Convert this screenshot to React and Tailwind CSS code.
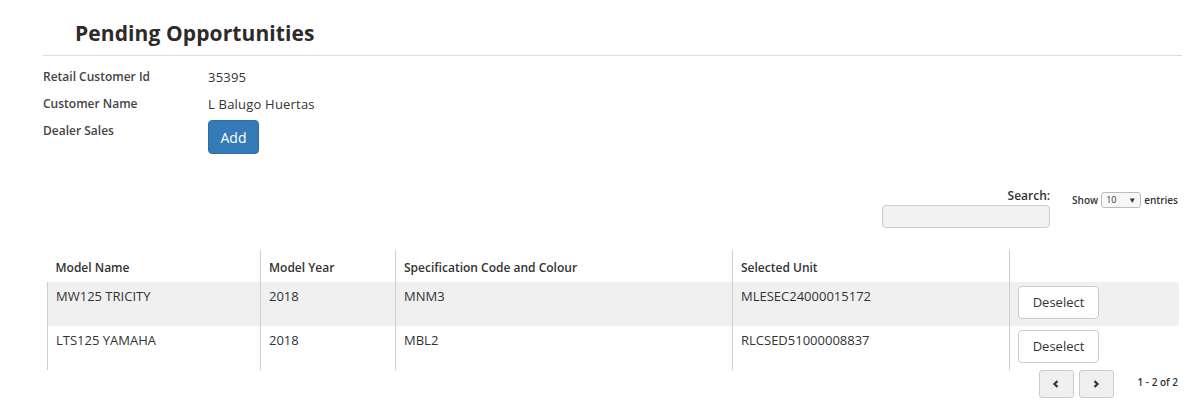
import React from "react";

const rows = [
  { name: "MW125 TRICITY", year: "2018", spec: "MNM3", unit: "MLESEC24000015172", bg: "bg-[#f0f0f0]" },
  { name: "LTS125 YAMAHA", year: "2018", spec: "MBL2", unit: "RLCSED51000008837", bg: "bg-white" },
];

export default function App() {
  return (
    <div className="w-[1199px] h-[414px] bg-white text-[#333] overflow-hidden" style={{ fontFamily: '"Open Sans", "Noto Sans", sans-serif' }}>
      <div className="pl-[43px] pr-[17px] pt-[19px]">
        <div className="border-b border-[#dddddd] pb-[7px] pl-[32px]">
          <h1 className="text-[21px] leading-[29px] font-bold text-[#2f2a2a] tracking-[0.1px]">Pending Opportunities</h1>
        </div>
        <div className="mt-[11px] grid grid-cols-[165px_1fr] text-[12px]">
          <div className="h-[27px] leading-[20px] font-semibold text-[#444]">Retail Customer Id</div>
          <div className="h-[27px] leading-[20px] text-[13px] tracking-[0.2px]">35395</div>
          <div className="h-[27px] leading-[20px] font-semibold text-[#444]">Customer Name</div>
          <div className="h-[27px] leading-[20px] text-[13px] tracking-[0.2px]">L Balugo Huertas</div>
          <div className="leading-[20px] font-semibold text-[#444]">Dealer Sales</div>
          <div>
            <button className="mt-[-1px] w-[51px] h-[34px] rounded-[4px] bg-[#337ab7] border border-[#2e6da4] text-white text-[14px]">Add</button>
          </div>
        </div>
        <div className="mt-[32px] flex justify-end items-start">
          <div className="flex flex-col items-end">
            <label className="text-[12px] font-semibold text-[#333] leading-[18px] mt-[1px]">Search:</label>
            <input className="mt-[0px] w-[168px] h-[23px] bg-[#f2f2f2] border border-[#cccccc] rounded-[4px]" />
          </div>
          <div className="ml-[22px] mr-[4px] flex items-center gap-[3px] text-[10px] font-semibold text-[#333] mt-[6px]">
            <span>Show</span>
            <div className="w-[40px] h-[16px] border border-[#bbb] rounded-[3px] bg-[#f7f7f7] flex items-center justify-between px-[4px] text-[9px] font-normal">
              <span>10</span>
              <span className="text-[8px]">▼</span>
            </div>
            <span>entries</span>
          </div>
        </div>
        <div className="mt-[22px] ml-[4px] w-[1132px]">
          <table className="w-full border-collapse text-[13px]">
            <thead>
              <tr className="h-[32px]">
                <th className="w-[213px] text-left font-semibold text-[12px] pl-[8px] pt-[3px]">Model Name</th>
                <th className="w-[135px] text-left font-semibold text-[12px] pl-[8px] pt-[3px] border-l border-[#cfcfcf]">Model Year</th>
                <th className="w-[337px] text-left font-semibold text-[12px] pl-[8px] pt-[3px] border-l border-[#cfcfcf]">Specification Code and Colour</th>
                <th className="w-[277px] text-left font-semibold text-[12px] pl-[8px] pt-[3px] border-l border-[#cfcfcf]">Selected Unit</th>
                <th className="border-l border-[#cfcfcf]"></th>
              </tr>
            </thead>
            <tbody>
              {rows.map((r) => (
                <tr key={r.unit} className={`${r.bg} h-[44px]`}>
                  <td className="align-top pl-[8px] pt-[5px] border-l border-[#cfcfcf]">{r.name}</td>
                  <td className="align-top pl-[8px] pt-[5px] border-l border-[#cfcfcf]">{r.year}</td>
                  <td className="align-top pl-[8px] pt-[5px] border-l border-[#cfcfcf]">{r.spec}</td>
                  <td className="align-top pl-[8px] pt-[5px] border-l border-[#cfcfcf]">{r.unit}</td>
                  <td className="align-top pl-[8px] pt-[4px] border-l border-[#cfcfcf]">
                    <button className="w-[81px] h-[33px] bg-white border border-[#cccccc] rounded-[4px] text-[13px] text-[#333]">Deselect</button>
                  </td>
                </tr>
              ))}
            </tbody>
          </table>
        </div>
        <div className="flex justify-end items-center mr-[4px]">
          <button className="w-[35px] h-[28px] bg-[#f0f0f0] border border-[#cccccc] rounded-[3px] flex items-center justify-center">
            <svg width="10" height="10" viewBox="0 0 10 10"><path d="M6.5 2 L3.5 5 L6.5 8" stroke="#333" strokeWidth="2.2" fill="none" /></svg>
          </button>
          <button className="ml-[5px] w-[35px] h-[28px] bg-[#f0f0f0] border border-[#cccccc] rounded-[3px] flex items-center justify-center">
            <svg width="10" height="10" viewBox="0 0 10 10"><path d="M3.5 2 L6.5 5 L3.5 8" stroke="#333" strokeWidth="2.2" fill="none" /></svg>
          </button>
          <span className="ml-[24px] text-[10px] font-semibold text-[#333] mt-[-4px]">1 - 2 of 2</span>
        </div>
      </div>
    </div>
  );
}
